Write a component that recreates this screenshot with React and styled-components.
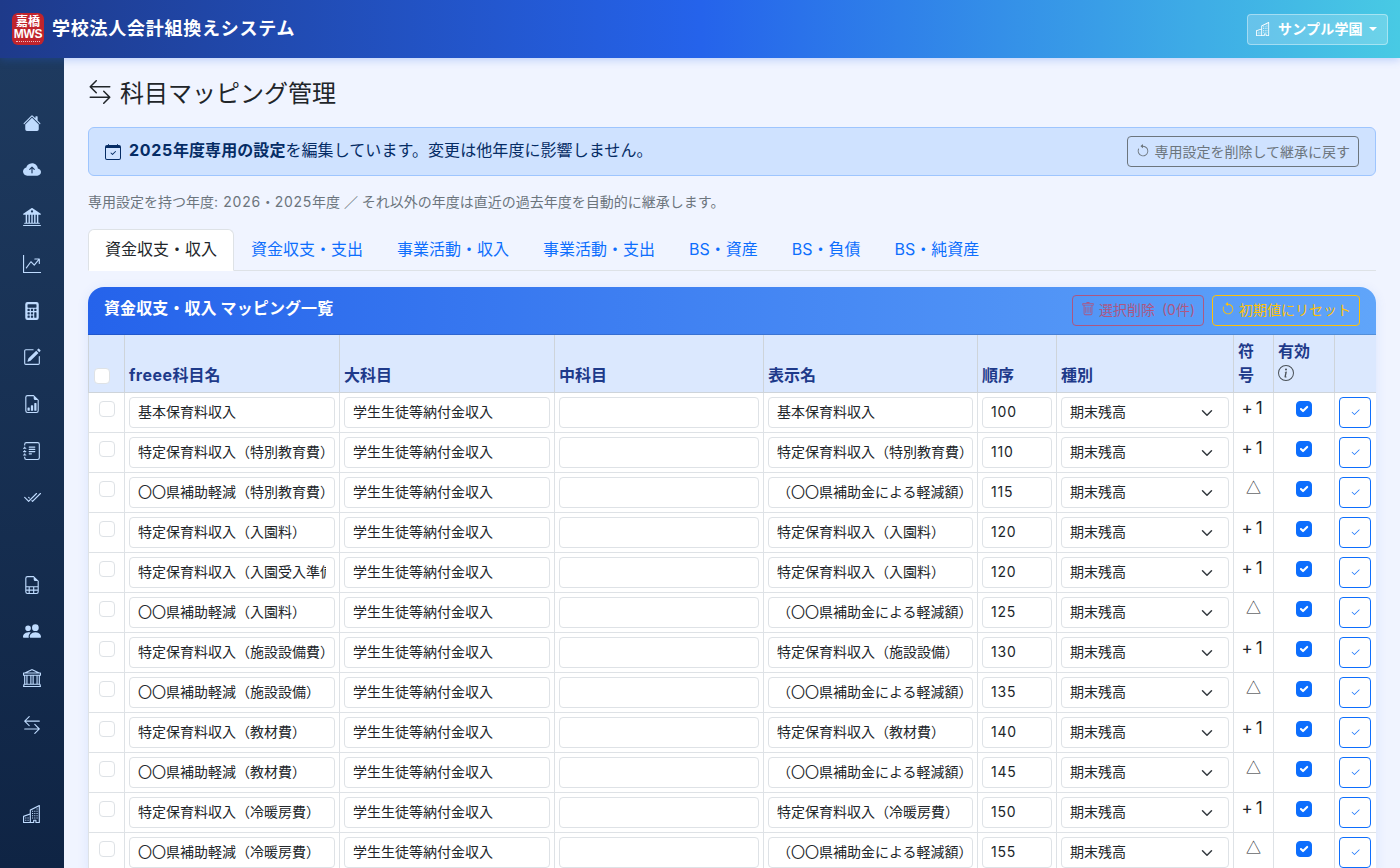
import React from "react";
import styled, { createGlobalStyle } from "styled-components";
import {
  BsHouseFill, BsCloudArrowUpFill, BsBank2, BsGraphUpArrow, BsCalculatorFill, BsPencilSquare,
  BsFileEarmarkBarGraph, BsJournalText, BsCheck2All, BsFileEarmarkSpreadsheet, BsPeopleFill, BsBank,
  BsArrowLeftRight, BsBuildings, BsCalendarCheck, BsArrowCounterclockwise, BsTrash, BsInfoCircle, BsCheck2,
} from "react-icons/bs";

const FONT = `Inter, "Noto Sans CJK JP", "Noto Sans", sans-serif`;
const CJK = `"Noto Sans CJK JP", sans-serif`;

const Global = createGlobalStyle`
  html, body { margin: 0; padding: 0; height: 100%; overflow: hidden; }
  body { font-family: ${FONT}; background: #f0f4ff; color: #212529; }
  * { box-sizing: border-box; }
`;

const Shell = styled.div`
  height: 868px;
  display: flex;
  flex-direction: column;
  overflow: hidden;
`;
const Header = styled.header`
  height: 58px;
  flex: none;
  display: flex;
  align-items: center;
  justify-content: space-between;
  padding: 0 12px;
  background: linear-gradient(90deg, #1e3a8a 0%, #2563eb 50%, #48cae4 100%);
  box-shadow: 0 2px 8px rgba(37, 99, 235, 0.25);
  position: relative;
  z-index: 2;
`;
const Brand = styled.div`
  display: flex;
  align-items: center;
  gap: 8px;
  color: #fff;
  font-size: 18px;
  font-weight: 700;
  letter-spacing: 0.75px;
`;
const BrandName = styled.span`
  margin-top: -4px;
`;
const Logo = styled.div`
  width: 32px;
  height: 32px;
  border-radius: 6px;
  background: #c0242c;
  color: #fff;
  display: flex;
  flex-direction: column;
  align-items: center;
  justify-content: center;
  font-weight: 700;
  letter-spacing: 0;
`;
const LogoKanji = styled.span`
  font-size: 12px;
  line-height: 12px;
`;
const LogoLatin = styled.span`
  font-size: 12px;
  line-height: 12px;
  font-family: "Liberation Sans", sans-serif;
  letter-spacing: -0.3px;
`;
const LogoRule = styled.span`
  width: 24px;
  height: 1px;
  margin-top: 1px;
  border-top: 1px dotted rgba(255, 255, 255, 0.7);
`;
const SchoolButton = styled.button`
  width: 141px;
  height: 31px;
  border: 1px solid rgba(255, 255, 255, 0.4);
  border-radius: 4px;
  background: rgba(255, 255, 255, 0.2);
  color: #fff;
  font: 700 14px ${FONT};
  letter-spacing: 0.2px;
  display: flex;
  align-items: center;
  padding: 0 8px;
  gap: 8px;
`;
const SchoolName = styled.span`
  margin-top: -3px;
`;
const Caret = styled.span`
  width: 0;
  height: 0;
  margin-left: -2px;
  border-left: 4.5px solid transparent;
  border-right: 4.5px solid transparent;
  border-top: 4.5px solid #fff;
`;
const Body = styled.div`
  flex: 1;
  min-height: 0;
  display: flex;
`;
const Sidebar = styled.nav`
  width: 64px;
  flex: none;
  background: linear-gradient(180deg, #1e3a5f 0%, #0f2444 100%);
  color: #bfdbfe;
  display: flex;
  flex-direction: column;
  align-items: center;
  padding-top: 42px;
`;
const NavItem = styled.div`
  height: 46.8px;
  flex: none;
  width: 100%;
  display: flex;
  align-items: center;
  justify-content: center;
  font-size: 18px;
`;
const NavGap = styled.div`
  height: ${(p) => p.$h}px;
  flex: none;
`;
const Main = styled.main`
  flex: 1;
  min-width: 0;
  padding: 16px 24px 0;
  overflow: hidden;
`;
const Title = styled.h1`
  margin: 0 0 18px;
  height: 35px;
  display: flex;
  align-items: center;
  gap: 8px;
  font-size: 24px;
  font-weight: 400;
  color: #212529;
`;
const Notice = styled.div`
  height: 49px;
  display: flex;
  align-items: center;
  justify-content: space-between;
  padding: 0 16px;
  background: #cfe2ff;
  border: 1px solid #9ec5fe;
  border-radius: 6px;
  color: #052c65;
  font-size: 16px;
`;
const NoticeText = styled.div`
  display: flex;
  align-items: center;
  gap: 8px;
  b { font-weight: 700; }
`;
const NoticeLine = styled.span`
  margin-top: -5px;
  letter-spacing: 0.07px;
`;
const Wide = styled.span`
  letter-spacing: ${(p) => p.$ls || 0.7}px;
`;
const OutlineSmall = styled.button`
  height: 31px;
  padding: 0 8px 2px;
  border: 1px solid #6c757d;
  border-radius: 4px;
  background: transparent;
  color: #6c757d;
  font: 400 14px ${FONT};
  display: flex;
  align-items: center;
  gap: 4px;
`;
const Note = styled.p`
  margin: 15px 0 17px;
  font-size: 14px;
  line-height: 21px;
  color: #6c757d;
`;
const Tabs = styled.div`
  display: flex;
  height: 42px;
  border-bottom: 1px solid #dee2e6;
  margin-bottom: 16px;
`;
const Tab = styled.div`
  height: 42px;
  padding: 0 16px 4px;
  display: flex;
  align-items: center;
  font-size: 16px;
  border: 1px solid ${(p) => (p.$active ? "#dee2e6" : "transparent")};
  border-bottom-color: ${(p) => (p.$active ? "#fff" : "transparent")};
  border-radius: 6px 6px 0 0;
  background: ${(p) => (p.$active ? "#fff" : "transparent")};
  color: ${(p) => (p.$active ? "#212529" : "#0d6efd")};
`;
const Card = styled.section`
  border-radius: 16px 16px 0 0;
  overflow: hidden;
  box-shadow: 0 2px 12px rgba(37, 99, 235, 0.1);
  background: #fff;
`;
const CardHead = styled.div`
  height: 48px;
  display: flex;
  align-items: center;
  justify-content: space-between;
  padding: 0 16px;
  background: linear-gradient(90deg, #2563eb 0%, #60a5fa 100%);
  border-bottom: 1px solid rgba(0, 0, 0, 0.13);
`;
const CardTitle = styled.div`
  color: #fff;
  font-size: 16px;
  font-weight: 700;
  letter-spacing: 0.1px;
  margin-top: -7px;
`;
const CardActions = styled.div`
  display: flex;
  gap: 8px;
`;
const GhostButton = styled.button`
  height: 31px;
  padding: 0 8px 3px;
  border: 1px solid ${(p) => p.$color};
  border-radius: 4px;
  background: transparent;
  color: ${(p) => p.$color};
  font: 400 14px ${FONT};
  word-spacing: 3px;
  display: flex;
  align-items: center;
  gap: 4px;
  opacity: ${(p) => (p.$disabled ? 0.65 : 1)};
`;
const Table = styled.table`
  width: 1288px;
  table-layout: fixed;
  border-collapse: collapse;
  font-size: 14px;
`;
const Th = styled.th`
  height: 57px;
  padding: 4px 4px 5px;
  background: #dbe8fe;
  border: 1px solid #ced4da;
  border-top: 0;
  color: #1e3a8a;
  font-size: 16px;
  font-weight: 700;
  text-align: left;
  vertical-align: bottom;
  line-height: 24px;
`;
const Td = styled.td`
  height: 40px;
  padding: 4px;
  border: 1px solid #dee2e6;
  vertical-align: top;
  text-align: ${(p) => p.$align || "left"};
`;
const Input = styled.input`
  display: block;
  width: 100%;
  height: 31px;
  padding: 0 8px ${(p) => (p.$num ? 2 : 4)}px;
  border: 1px solid #dee2e6;
  border-radius: 4px;
  background: #fff;
  font: 400 14px ${FONT};
  letter-spacing: ${(p) => (p.$num ? 0.8 : 0)}px;
  color: #212529;
  outline: none;
`;
const Select = styled.div`
  height: 31px;
  padding: 0 13px 4px 8px;
  border: 1px solid #dee2e6;
  border-radius: 4px;
  background: #fff;
  font-size: 14px;
  color: #212529;
  display: flex;
  align-items: center;
  justify-content: space-between;
`;
const Check = styled.span`
  display: inline-flex;
  align-items: center;
  justify-content: center;
  width: 16px;
  height: 16px;
  margin-top: ${(p) => p.$mt ?? 4}px;
  border-radius: 4px;
  border: 1px solid ${(p) => (p.$on ? "#0d6efd" : "#dee2e6")};
  background: ${(p) => (p.$on ? "#0d6efd" : "#fff")};
  color: #fff;
`;
const Sign = styled.div`
  font-family: ${(p) => (p.$tri ? CJK : FONT)};
  font-size: ${(p) => (p.$tri ? 15 : 17)}px;
  font-weight: 400;
  line-height: ${(p) => (p.$tri ? 19 : 23)}px;
  letter-spacing: ${(p) => (p.$tri ? 0 : 3)}px;
  color: #212529;
`;
const SaveButton = styled.button`
  width: 32px;
  height: 31px;
  padding: 0;
  border: 1px solid #0d6efd;
  border-radius: 4px;
  background: #fff;
  color: #0d6efd;
  display: flex;
  align-items: center;
  justify-content: center;
  font-size: 11px;
`;
const HeadCheck = styled.div`
  padding-left: 1px;
  height: 21px;
`;
const IconSvg = styled.svg`
  display: block;
  margin-top: ${(p) => p.$mt || 0}px;
`;

const widths = [36, 215, 215, 209, 214, 79, 177, 40, 61, 42];

const S = "特定保育料収入";
const K = "〇〇県補助軽減";
const G = "（〇〇県補助金による軽減額）";
const rows = [
  ["基本保育料収入", "基本保育料収入", 100, "+1"],
  [`${S}（特別教育費）`, `${S}（特別教育費）`, 110, "+1"],
  [`${K}（特別教育費）`, G, 115, "△"],
  [`${S}（入園料）`, `${S}（入園料）`, 120, "+1"],
  [`${S}（入園受入準備費）`, `${S}（入園料）`, 120, "+1"],
  [`${K}（入園料）`, G, 125, "△"],
  [`${S}（施設設備費）`, `${S}（施設設備）`, 130, "+1"],
  [`${K}（施設設備）`, G, 135, "△"],
  [`${S}（教材費）`, `${S}（教材費）`, 140, "+1"],
  [`${K}（教材費）`, G, 145, "△"],
  [`${S}（冷暖房費）`, `${S}（冷暖房費）`, 150, "+1"],
  [`${K}（冷暖房費）`, G, 155, "△"],
];

const navTop = [BsHouseFill, BsCloudArrowUpFill, BsBank2, BsGraphUpArrow, BsCalculatorFill, BsPencilSquare, BsFileEarmarkBarGraph, BsJournalText, BsCheck2All];
const navBottom = [BsFileEarmarkSpreadsheet, BsPeopleFill, BsBank, BsArrowLeftRight];
const tabs = ["資金収支・収入", "資金収支・支出", "事業活動・収入", "事業活動・支出", "BS・資産", "BS・負債", "BS・純資産"];

const Tick = () => (
  <IconSvg width="12" height="12" viewBox="0 0 20 20">
    <path fill="none" stroke="#fff" strokeWidth="3" strokeLinecap="round" strokeLinejoin="round" d="m6 10 3 3 6-6" transform="translate(-0.5 0) scale(1.15) translate(-1.3 -1.3)" />
  </IconSvg>
);
const Chevron = () => (
  <IconSvg $mt={4} width="16" height="16" viewBox="0 0 16 16">
    <path fill="none" stroke="#343a40" strokeWidth="2" strokeLinecap="round" strokeLinejoin="round" d="m2 5 6 6 6-6" transform="translate(2 2) scale(.75)" />
  </IconSvg>
);

export default function App() {
  return (
    <Shell>
      <Global />
      <Header>
        <Brand>
          <Logo>
            <LogoKanji>嘉橋</LogoKanji>
            <LogoLatin>MWS</LogoLatin>
            <LogoRule />
          </Logo>
          <BrandName>学校法人会計組換えシステム</BrandName>
        </Brand>
        <SchoolButton>
          <BsBuildings size={14} />
          <SchoolName>サンプル学園</SchoolName>
          <Caret />
        </SchoolButton>
      </Header>
      <Body>
        <Sidebar>
          {navTop.map((I, i) => (
            <NavItem key={i}><I /></NavItem>
          ))}
          <NavGap $h={40} />
          {navBottom.map((I, i) => (
            <NavItem key={i}><I /></NavItem>
          ))}
          <NavGap $h={42} />
          <NavItem><BsBuildings /></NavItem>
        </Sidebar>
        <Main>
          <Title><BsArrowLeftRight size={24} />科目マッピング管理</Title>
          <Notice>
            <NoticeText>
              <BsCalendarCheck size={16} />
              <NoticeLine><b><Wide>2025</Wide>年度専用の設定</b>を編集しています。変更は他年度に影響しません。</NoticeLine>
            </NoticeText>
            <OutlineSmall><BsArrowCounterclockwise size={14} />専用設定を削除して継承に戻す</OutlineSmall>
          </Notice>
          <Note>専用設定を持つ年度<Wide>: 2026</Wide>・<Wide>2025</Wide>年度 ／ それ以外の年度は直近の過去年度を自動的に継承します。</Note>
          <Tabs>
            {tabs.map((t, i) => (
              <Tab key={t} $active={i === 0}>{t}</Tab>
            ))}
          </Tabs>
          <Card>
            <CardHead>
              <CardTitle>資金収支・収入 マッピング一覧</CardTitle>
              <CardActions>
                <GhostButton $color="#dc3545" $disabled><BsTrash size={14} />選択削除 (0件)</GhostButton>
                <GhostButton $color="#ffc107"><BsArrowCounterclockwise size={14} />初期値にリセット</GhostButton>
              </CardActions>
            </CardHead>
            <Table>
              <colgroup>
                {widths.map((w, i) => <col key={i} style={{ width: w }} />)}
              </colgroup>
              <thead>
                <tr>
                  <Th><HeadCheck><Check $mt={0} /></HeadCheck></Th>
                  <Th><Wide $ls={0.5}>freee</Wide>科目名</Th>
                  <Th>大科目</Th>
                  <Th>中科目</Th>
                  <Th>表示名</Th>
                  <Th>順序</Th>
                  <Th>種別</Th>
                  <Th>符号</Th>
                  <Th>有効<br /><BsInfoCircle size={16} color="#495057" /></Th>
                  <Th />
                </tr>
              </thead>
              <tbody>
                {rows.map((r, i) => (
                  <tr key={i}>
                    <Td $align="center"><Check /></Td>
                    <Td><Input readOnly value={r[0]} /></Td>
                    <Td><Input readOnly value="学生生徒等納付金収入" /></Td>
                    <Td><Input readOnly value="" /></Td>
                    <Td><Input readOnly value={r[1]} /></Td>
                    <Td><Input readOnly $num value={r[2]} /></Td>
                    <Td><Select>期末残高<Chevron /></Select></Td>
                    <Td $align="center"><Sign $tri={r[3] === "△"}>{r[3]}</Sign></Td>
                    <Td $align="center"><Check $on><Tick /></Check></Td>
                    <Td><SaveButton><BsCheck2 /></SaveButton></Td>
                  </tr>
                ))}
              </tbody>
            </Table>
          </Card>
        </Main>
      </Body>
    </Shell>
  );
}
